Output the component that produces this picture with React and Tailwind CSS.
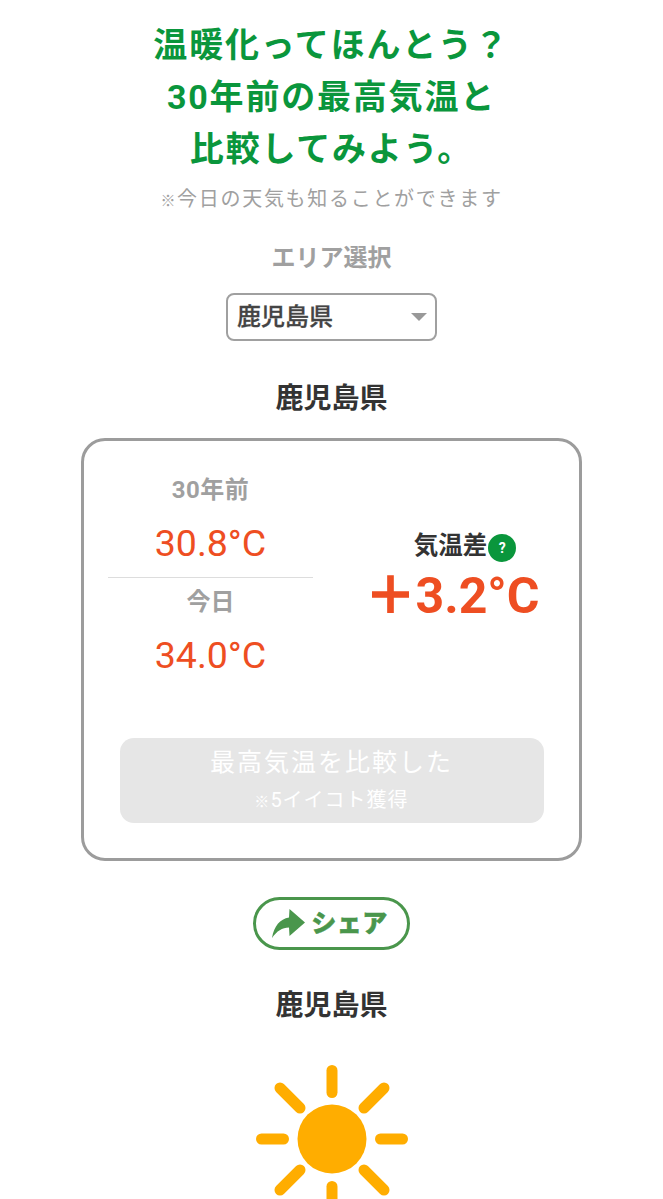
import React from 'react';

const font = 'font-["Roboto","Noto_Sans_CJK_JP",sans-serif]';

const SunIcon = () => (
  <svg width="154" height="134" viewBox="0 0 154 134" className="block">
    <circle cx="77" cy="74" r="34.5" fill="#ffad00" />
    <g stroke="#ffad00" strokeWidth="11" strokeLinecap="round">
      <path d="M77 5.500V27.500" />
      <path d="M77 121.500V140" />
      <path d="M6.500 74H28.500" />
      <path d="M125.500 74H147.500" />
      <path d="M25 23L45 43" />
      <path d="M129 23L109 43" />
      <path d="M45 105L25 125" />
      <path d="M109 105L129 125" />
    </g>
  </svg>
);

const ShareButton = () => (
  <div className="flex h-[53px] w-[157px] items-center justify-center gap-[4px] rounded-full border-[3px] border-[#4a964c] bg-white pr-[4px] text-[#4a964c]">
    <svg width="36" height="32" viewBox="0 0 36 32" className="block">
      <path d="M1 30C3 18 9 11 18 9.500L18.500 1L34 14.500L18.500 28L18 19.500C11 19.500 6 23 1 30Z" fill="#4a964c" />
    </svg>
    <span className="text-[25px] leading-none font-black tracking-[0.500px] [-webkit-text-stroke:0.5px_#4a964c]">シェア</span>
  </div>
);

const TempColumn = () => (
  <div className="-ml-[1px] w-[205px] text-center">
    <p className="text-[24px] leading-[30px] font-bold tracking-[0.500px] text-[#a0a0a0]">30年前</p>
    <p className="mt-[13px] text-[37.5px] leading-[50px] text-[#ee4e22]">30.8°C</p>
    <div className="mt-[9px] border-t border-[#dddddd]" />
    <p className="mt-[9px] text-[24px] leading-[30px] font-bold text-[#a0a0a0]">今日</p>
    <p className="mt-[13px] text-[37.5px] leading-[50px] text-[#ee4e22]">34.0°C</p>
  </div>
);

const DiffColumn = () => (
  <div className="flex w-[190px] flex-col items-center pt-[54px]">
    <div className="ml-[12px] flex items-center gap-[1px]">
      <span className="text-[24.5px] leading-[32px] font-bold text-[#333333]">気温差</span>
      <span className="mt-[5px] flex h-[28px] w-[28px] items-center justify-center rounded-full bg-[#0a963c] text-[14px] font-bold text-white">?</span>
    </div>
    <p className="mt-[4px] mr-[13px] text-[50px] leading-[60px] font-bold whitespace-nowrap text-[#ee4e22]">
      <span className="[-webkit-text-stroke:1.5px_#ee4e22]">＋</span>3.2°C
    </p>
  </div>
);

const App = () => {
  return (
    <div className={`h-[1199px] w-[663px] overflow-hidden bg-white text-center ${font}`}>
      <div className="pt-[19px] text-[34px] leading-[52px] font-bold tracking-[1.800px] text-[#0a963c]">
        <p>温暖化ってほんとう？</p>
        <p>30年前の最高気温と</p>
        <p>比較してみよう。</p>
      </div>
      <p className="mt-[9px] text-[20px] leading-[30px] tracking-[1.700px] text-[#a0a0a0]">
        <span className="text-[15px]">※</span>今日の天気も知ることができます
      </p>

      <p className="mt-[27px] text-[24px] leading-[30px] font-bold text-[#a0a0a0]">エリア選択</p>

      <div className="mt-[20px] flex justify-center">
        <div className="flex h-[48px] w-[211px] items-center justify-between rounded-lg border-2 border-[#a0a0a0] pr-[8px] pl-[9px]">
          <span className="text-[24px] font-medium text-[#444444] [-webkit-text-stroke:0.3px_#444444]">鹿児島県</span>
          <span className="h-0 w-0 border-x-[8px] border-t-[8px] border-x-transparent border-t-[#999999]" />
        </div>
      </div>

      <h2 className="mt-[38px] text-[28px] leading-[40px] font-bold text-[#333333]">鹿児島県</h2>

      <div className="mx-auto mt-[19px] h-[423px] w-[501px] rounded-[24px] border-[3px] border-[#9c9c9c] px-[25px] pt-[34px]">
        <div className="flex justify-between">
          <TempColumn />
          <DiffColumn />
        </div>
        <div className="mx-auto mt-[58px] flex h-[85px] w-[424px] flex-col items-center justify-center rounded-[14px] bg-[#e6e6e6] pb-[2px] text-white">
          <p className="text-[25px] leading-[38px] tracking-[2px]">最高気温を比較した</p>
          <p className="mt-[4px] text-[20px] leading-[28px] tracking-[1px]">
            <span className="text-[15px]">※</span>5イイコト獲得
          </p>
        </div>
      </div>

      <div className="mt-[36px] flex justify-center">
        <ShareButton />
      </div>

      <h2 className="mt-[36px] text-[28px] leading-[40px] font-bold text-[#333333]">鹿児島県</h2>

      <div className="mt-[39px] flex justify-center">
        <SunIcon />
      </div>
    </div>
  );
};

export default App;
